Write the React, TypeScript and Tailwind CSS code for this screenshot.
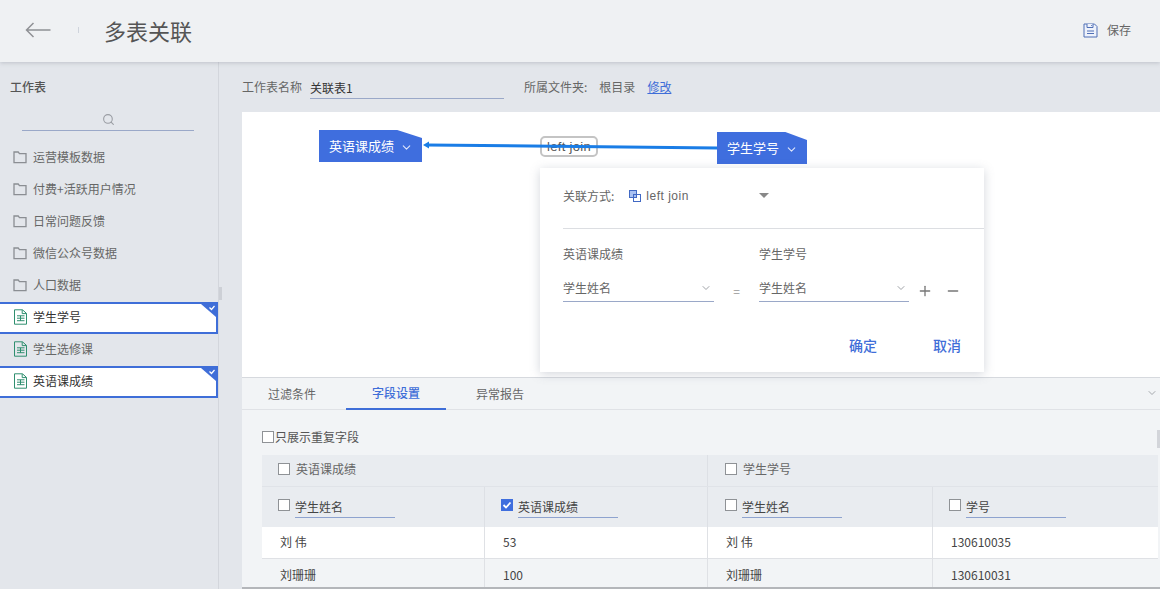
import React from "react";
import { ChevronDown, Search, Plus, Minus } from "lucide-react";

const Folder = () => (
  <svg width="14" height="14" viewBox="0 0 14 14" fill="none" stroke="#8b8e93" strokeWidth="1.3" className="shrink-0">
    <path d="M1 2h4.2l1.3 1.6H13V12.6H1z" />
  </svg>
);
const Sheet = () => (
  <svg width="15" height="16" viewBox="0 0 15 16" fill="none" stroke="#2f8f6f" strokeWidth="1" className="shrink-0">
    <path d="M1.5.8h8l4 3.6v10.8h-12z" />
    <path d="M9.2 1v3.6h4.2M4 6.8h7.5M4 9.2h7.5M4 11.7h7.5M7.5 6.8v5" />
  </svg>
);
const Check = ({ on = false }: { on?: boolean }) =>
  on ? (
    <span className="w-[12px] h-[12px] bg-[#3f6ede] flex items-center justify-center shrink-0">
      <svg width="10" height="10" viewBox="0 0 10 10" fill="none" stroke="#fff" strokeWidth="1.8"><path d="M1.5 5l2.5 2.5 4.5-5" /></svg>
    </span>
  ) : (
    <span className="w-[12px] h-[12px] bg-white border border-[#8f9296] shrink-0" />
  );

function Item({ label, kind = "folder", selected = false }: { label: string; kind?: string; selected?: boolean }) {
  return (
    <div
      className={
        selected
          ? "relative h-[32px] flex items-center pl-[13px] pb-[2px] gap-[5px] bg-white border-y-2 border-r-2 border-[#3f6ed8] text-[#333] text-xs"
          : "h-[32px] flex items-center pl-[13px] pb-[2px] gap-[5px] text-[#666] text-xs"
      }
    >
      {kind === "folder" ? <Folder /> : <Sheet />}
      <span className={kind === "folder" ? "ml-[1px]" : ""}>{label}</span>
      {selected && (
        <svg width="15" height="13" viewBox="0 0 15 13" className="absolute right-0 top-0">
          <path d="M0 0h15v13z" fill="#3f6ed8" />
          <path d="M8.5 3.5l2 2 3-3.5" fill="none" stroke="#fff" strokeWidth="1.2" />
        </svg>
      )}
    </div>
  );
}

function Node({ label, cls }: { label: string; cls: string }) {
  return (
    <div
      className={"absolute h-[32px] bg-[#3f6ede] text-white text-[13px] flex items-center pl-[10px] gap-[6px] [clip-path:polygon(0_0,76%_0,100%_25%,100%_100%,0_100%)] " + cls}
    >
      <span>{label}</span>
      <ChevronDown size={13} color="#dfe6fa" className="mt-[2px]" />
    </div>
  );
}

function Pick({ w }: { w: string }) {
  return (
    <div className={"h-[28px] flex items-center justify-between border-b border-[#9aa8c8] text-xs text-[#666] pr-[2px] " + w}>
      <span>学生姓名</span>
      <ChevronDown size={12} color="#a0a3a8" />
    </div>
  );
}

function Head({ label, on = false, cell = "" }: { label: string; on?: boolean; cell?: string }) {
  return (
    <div className={"h-[40px] flex items-start pl-[16px] gap-[5px] pt-[12px] text-xs text-[#444] " + cell}>
      <Check on={on} />
      <span className="w-[100px] border-b border-[#8ea3cf] h-[20px] -mt-[1px] leading-[18px]">{label}</span>
    </div>
  );
}

export default function App() {
  return (
    <div className="w-[1160px] h-[589px] overflow-hidden flex flex-col bg-[#e3e6eb] font-['Noto_Sans_CJK_SC','Liberation_Sans',sans-serif]">
      <header className="relative z-10 h-[62px] shrink-0 bg-[#eff1f3] shadow-[0_1px_4px_rgba(120,125,140,0.35)] flex items-center pl-[25px] pr-[29px] pb-[2px]">
        <svg width="26" height="16" viewBox="0 0 26 16" fill="none" stroke="#8f9195" strokeWidth="1.5">
          <path d="M25.5 8H1.5M8.5 1L1.5 8l7 7" />
        </svg>
        <span className="w-px h-[6px] bg-[#cfd4dc] ml-[27px]" />
        <h1 className="ml-[25px] text-[22px] text-[#555] font-normal leading-none pb-[1px]">多表关联</h1>
        <div className="ml-auto flex items-center gap-[9px] text-xs text-[#666]">
          <svg width="15" height="15" viewBox="0 0 15 15" fill="#eef2fb" stroke="#4f6fb5" strokeWidth="1">
            <path d="M1 1h10.5L14 3.5V14H1z" />
            <path d="M4 1v3.5h6V1M8 2.5h.8M4 8h7M4 10.5h7" />
          </svg>
          <span>保存</span>
        </div>
      </header>

      <div className="flex-1 flex min-h-0">
        <aside className="w-[219px] shrink-0 border-r border-[#d3d6dc] relative">
          <div className="pl-[10px] pt-[17px] text-xs text-[#555] font-medium leading-[16px]">工作表</div>
          <div className="ml-[22px] w-[172px] mt-[14px] h-[22px] border-b border-[#9aa8c8] flex justify-center items-center">
            <Search size={13} color="#9a9da3" />
          </div>
          <div className="mt-[11px]">
            <Item label="运营模板数据" />
            <Item label="付费+活跃用户情况" />
            <Item label="日常问题反馈" />
            <Item label="微信公众号数据" />
            <Item label="人口数据" />
            <Item label="学生学号" kind="sheet" selected />
            <Item label="学生选修课" kind="sheet" />
            <Item label="英语课成绩" kind="sheet" selected />
          </div>
          <span className="absolute right-[-4px] top-[225px] w-[3px] h-[13px] bg-[#cdd0d6]" />
        </aside>

        <main className="flex-1 min-w-0 flex flex-col pl-[23px]">
          <div className="h-[50px] shrink-0 flex items-center text-xs text-[#666]">
            <span>工作表名称</span>
            <span className="ml-[8px] w-[194px] h-[24px] border-b border-[#9aa8c8] flex items-center text-[#333] pt-[2px]">关联表1</span>
            <span className="ml-[20px]">所属文件夹:</span>
            <span className="ml-[12px]">根目录</span>
            <span className="ml-[12px] text-[#3f6ed8] underline">修改</span>
          </div>

          <section className="relative z-[1] h-[265px] shrink-0 bg-white">
            <Node label="英语课成绩" cls="left-[77px] top-[18px] w-[103px]" />
            <Node label="学生学号" cls="left-[475px] top-[20px] w-[90px]" />
            <span className="absolute left-[298px] top-[24px] w-[58px] h-[21px] border-2 border-[#c4c4c4] rounded-[5px] flex items-center justify-center text-[13px] tracking-[0.3px] text-[#555] font-['Liberation_Sans',sans-serif]">
              left join
            </span>
            <svg width="300" height="12" viewBox="0 0 300 12" className="absolute left-[180px] top-[29px]">
              <path d="M5 4L295 7" stroke="#1a7de6" strokeWidth="3" />
              <path d="M1 4l6-3.5v7z" fill="#1a7de6" />
            </svg>

            <div className="absolute left-[298px] top-[56px] w-[444px] h-[204px] bg-white shadow-[0_2px_10px_rgba(110,120,140,0.3)] z-10 text-xs text-[#666]">
              <div className="h-[61px] ml-[23px] border-b border-[#dcdee2] flex items-start pt-[19px]">
                <span className="leading-[18px]">关联方式:</span>
                <svg width="12" height="12" viewBox="0 0 12 12" className="ml-[15px] mt-[3px]">
                  <rect x="0.5" y="0.5" width="7" height="7" fill="#a9c1f2" stroke="#4169c4" />
                  <rect x="4.5" y="4.5" width="7" height="7" fill="none" stroke="#4169c4" />
                </svg>
                <span className="ml-[5px] leading-[18px] font-['Liberation_Sans',sans-serif] tracking-[0.5px]">left join</span>
                <span className="ml-[70px] mt-[6px] w-0 h-0 border-x-[5px] border-x-transparent border-t-[5px] border-t-[#888]" />
              </div>
              <div className="flex pl-[23px] pt-[16px] leading-[18px]">
                <span className="w-[196px]">英语课成绩</span>
                <span>学生学号</span>
              </div>
              <div className="flex items-center pl-[23px] mt-[11px]">
                <Pick w="w-[151px]" />
                <span className="w-[45px] text-center text-[#999] pt-[6px]">=</span>
                <Pick w="w-[150px]" />
                <Plus size={16} color="#777" className="ml-[8px] mt-[6px]" />
                <Minus size={16} color="#777" className="ml-[12px] mt-[6px]" />
              </div>
              <div className="flex justify-end gap-[56px] pr-[23px] mt-[34px] text-[14px] font-medium text-[#3f6ed8] leading-[18px]">
                <span>确定</span>
                <span>取消</span>
              </div>
            </div>
          </section>

          <section className="flex-1 min-h-0 bg-[#f2f4f6] border-t border-[#d6d9de] border-b-2 border-b-[#b4b6ba] flex flex-col overflow-hidden">
            <div className="h-[32px] shrink-0 border-b border-[#e0e2e6] flex items-stretch text-xs text-[#666] relative">
              <span className="w-[104px] flex items-center justify-center pr-[4px]">过滤条件</span>
              <span className="w-[100px] flex items-center justify-center text-[#3f6ed8] font-medium border-b-2 border-[#3f6ed8] h-[32px]">字段设置</span>
              <span className="w-[108px] flex items-center justify-center">异常报告</span>
              <ChevronDown size={12} color="#a5a8ad" className="ml-auto mr-[2px] mt-[9px]" />
            </div>
            <div className="flex items-center gap-px pl-[20px] h-[45px] shrink-0 pt-[9px] text-xs text-[#555]">
              <Check />
              <span>只展示重复字段</span>
            </div>
            <div className="relative flex-1 min-h-0 ml-[20px] mr-[2px] text-xs text-[#444]">
              <div className="grid grid-cols-[446px_1fr] h-[32px] bg-[#e9ecf0] border-b border-[#e0e3e8]">
                <div className="flex items-center gap-[6px] pl-[16px] pb-[3px] border-r border-[#dde0e5]"><Check /><span className="text-[#666]">英语课成绩</span></div>
                <div className="flex items-center gap-[6px] pl-[17px] pb-[3px]"><Check /><span className="text-[#666]">学生学号</span></div>
              </div>
              <div className="grid grid-cols-[223px_223px_225px_1fr] bg-[#e9ecf0]">
                <Head label="学生姓名" cell="border-r border-[#dde0e5]" />
                <Head label="英语课成绩" on cell="border-r border-[#dde0e5]" />
                <Head label="学生姓名" cell="border-r border-[#dde0e5] pl-[17px]" />
                <Head label="学号" />
              </div>
              <div className="grid grid-cols-[223px_223px_225px_1fr] h-[32px] bg-white border-b border-[#dfe1e5] items-stretch">
                {["刘 伟", "53", "刘 伟", "130610035"].map((t, i) => (
                  <div key={i} className={"flex items-center pl-[18px] pb-[2px] " + (i < 3 ? "border-r border-[#dfe1e5]" : "")}>{t}</div>
                ))}
              </div>
              <div className="grid grid-cols-[223px_223px_225px_1fr] h-[32px] items-stretch">
                {["刘珊珊", "100", "刘珊珊", "130610031"].map((t, i) => (
                  <div key={i} className={"flex items-center pl-[18px] " + (i < 3 ? "border-r border-[#dfe1e5]" : "")}>{t}</div>
                ))}
              </div>
            </div>
            <span className="absolute right-0 top-[430px] w-[3px] h-[18px] bg-[#d3d5da]" />
          </section>
        </main>
      </div>
    </div>
  );
}
